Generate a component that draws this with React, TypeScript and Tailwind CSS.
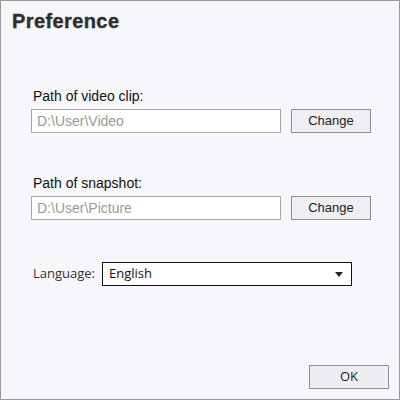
export default function App() {
  return (
    <div className="w-[400px] h-[400px] bg-[#f7f7fb] border border-[#9a9a9a] flex flex-col font-['Liberation_Sans',Arial,sans-serif] text-[#222]">
      <h1 className="pl-[11px] pt-[8px] text-[20px] leading-[24px] font-black text-[#2e2e2e] tracking-[0.4px] [-webkit-text-stroke:0.4px_#2e2e2e]">Preference</h1>

      <div className="pl-[30px] pt-[54px] flex flex-col">
        <PathRow label="Path of video clip:" value="D:\User\Video" />
        <div className="h-[41px]" />
        <PathRow label="Path of snapshot:" value="D:\User\Picture" />

        <div className="mt-[42px] flex items-center gap-[7px] pl-[2px]">
          <span className="text-[13px] font-['Open_Sans',sans-serif] text-[#333]">Language:</span>
          <div className="w-[250px] h-[24px] bg-white border border-[#111] flex items-center justify-between pl-[6px] pr-[8px]">
            <span className="text-[13px] font-['Open_Sans',sans-serif] text-[#111]">English</span>
            <svg width="8" height="5" viewBox="0 0 8 5">
              <path d="M0 0 H8 L4 5 Z" fill="#222" />
            </svg>
          </div>
        </div>
      </div>

      <div className="mt-auto flex justify-end pr-[10px] pb-[10px]">
        <button className="w-[80px] h-[24px] bg-[#eeeef2] border border-[#8f8f8f] text-[13px] text-[#222] font-['Open_Sans',sans-serif]">OK</button>
      </div>
    </div>
  );
}

function PathRow({ label, value }: { label: string; value: string }) {
  return (
    <div className="flex flex-col">
      <span className="pl-[2px] text-[14px] leading-[18px] text-[#111]">{label}</span>
      <div className="mt-[4px] flex items-center gap-[10px]">
        <div className="w-[250px] h-[24px] bg-white border border-[#a8a8a8] flex items-center pl-[5px]">
          <span className="text-[14px] text-[#999]">{value}</span>
        </div>
        <button className="w-[80px] h-[24px] bg-[#efeff3] border border-[#8f8f8f] text-[13px] text-[#222]">Change</button>
      </div>
    </div>
  );
}
